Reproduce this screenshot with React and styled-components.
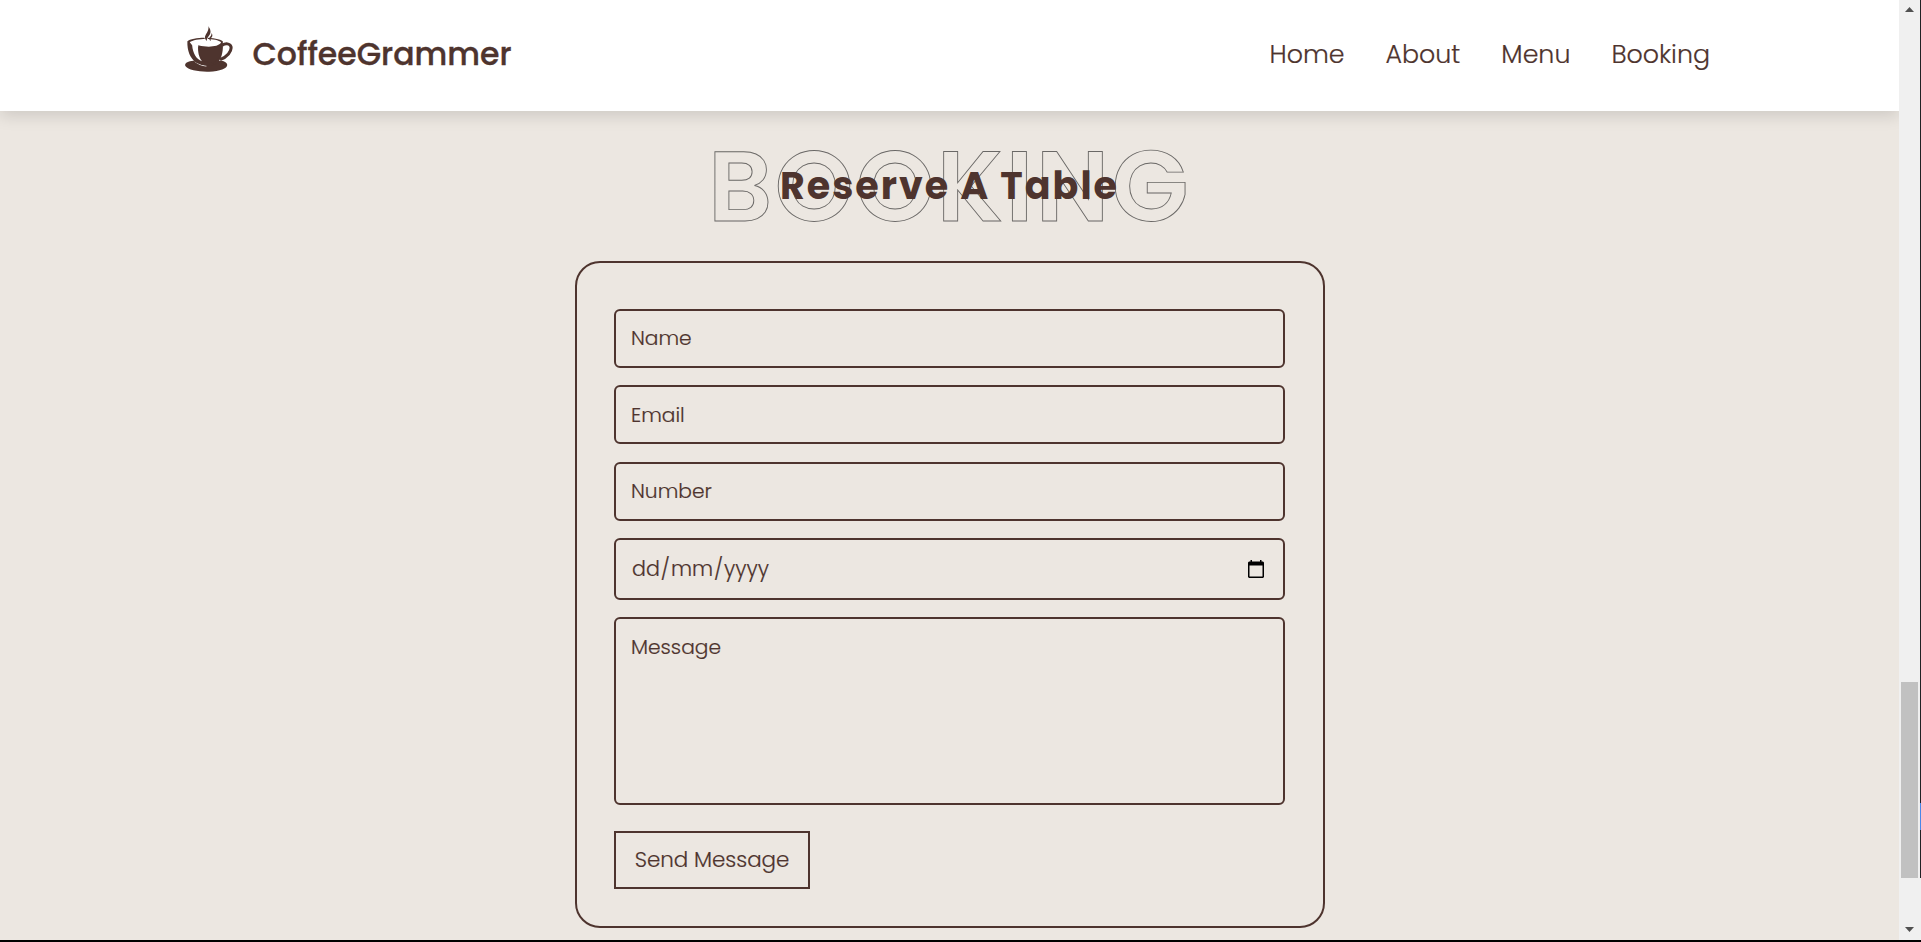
import React from 'react';
import styled, { createGlobalStyle } from 'styled-components';

const brown = '#4e342e';
const sand = '#ece7e1';

const Global = createGlobalStyle`
  *, *::before, *::after { box-sizing: border-box; }
  body {
    margin: 0;
    background: #000;
    color: ${brown};
    font-family: Poppins, Inter, 'Open Sans', sans-serif;
    overflow: hidden;
  }
`;

const Window = styled.div`
  display: flex;
  width: 1921px;
  height: 942px;
  padding-bottom: 2px;
  background: #000;
`;

const Page = styled.div`
  display: flex;
  flex-direction: column;
  width: 1899px;
  background: ${sand};
`;

const Header = styled.header`
  display: flex;
  flex: none;
  align-items: center;
  justify-content: space-between;
  height: 111px;
  padding: 0 189px 3px 185px;
  background: #fff;
  box-shadow: 0 5px 15px rgba(0, 0, 0, 0.13);
`;

const Brand = styled.a`
  display: flex;
  align-items: center;
  gap: 19.5px;
  > svg { margin-bottom: 11px; }
`;

const BrandName = styled.span`
  font-size: 31.5px;
  font-weight: 500;
  line-height: 40px;
  -webkit-text-stroke: 0.35px ${brown};
`;

const Nav = styled.nav`
  display: flex;
  gap: 41px;
`;

const NavLink = styled.a`
  font-size: 25.3px;
  font-weight: 300;
  line-height: 40px;
  white-space: nowrap;
  -webkit-text-stroke: 0.2px ${brown};
`;

const Heading = styled.div`
  display: grid;
  justify-items: center;
  align-items: center;
  height: 150px;
  > * { grid-area: 1 / 1; margin: 0; white-space: nowrap; }
`;

const Backdrop = styled.span`
  font-size: 100px;
  font-weight: 600;
  line-height: 150px;
  letter-spacing: 2.5px;
  color: transparent;
  -webkit-text-stroke: 0.9px #6a6866;
`;

const Title = styled.h2`
  font-size: 38px;
  font-weight: 700;
  line-height: 50px;
  letter-spacing: 2px;
`;

const Form = styled.form`
  display: flex;
  flex: none;
  flex-direction: column;
  align-items: flex-start;
  align-self: center;
  width: 750px;
  height: 667px;
  padding: 46px 37.5px 0;
  border: 2px solid ${brown};
  border-radius: 25px;
`;

const Field = styled.label`
  display: flex;
  align-items: ${(p) => (p.$top ? 'flex-start' : 'center')};
  width: 671px;
  height: ${(p) => p.$height}px;
  margin-bottom: ${(p) => p.$gap}px;
  padding: ${(p) => (p.$top ? '12px' : '0')} 19px 0 15px;
  border: 2px solid ${brown};
  border-radius: 6px;
`;

const Hint = styled.span`
  flex: 1;
  padding-bottom: ${(p) => p.$lift || 0}px;
  font-size: 20.2px;
  font-weight: 300;
  line-height: 32px;
  -webkit-text-stroke: 0.2px ${brown};
`;

const DateHint = styled(Hint)`
  font-size: 20.6px;
`;

const DatePart = styled.span`
  padding: 0 1px;
`;

const Send = styled.button`
  width: 196px;
  height: 58px;
  padding: 0 0 2px;
  border: 2px solid ${brown};
  background: transparent;
  color: ${brown};
  font: inherit;
  font-size: 21.4px;
  font-weight: 300;
  -webkit-text-stroke: 0.2px ${brown};
`;

const Scrollbar = styled.div`
  display: flex;
  flex-direction: column;
  align-items: center;
  width: 21px;
  padding-top: 7px;
  background: #f0f0f0;
  > svg { flex: none; }
`;

const Thumb = styled.div`
  width: 17px;
  height: 196px;
  margin: 670px 0 49px;
  background: #c1c1c1;
`;

const Edge = styled.div`
  width: 1px;
  background: linear-gradient(#202124 803px, #4a86e8 803px 830px, #202124 830px 878px, #f0f0f0 878px);
`;

const CupIcon = () => (
  <svg width="48" height="46" viewBox="15 18 141 138" preserveAspectRatio="none" fill={brown}>
    <path d="M40 122C22 123 13 130 16 138c8 12 40 18 70 17 32-1 54-11 53-21-1-7-7-10-17-12z" />
    <path d="M44 124q14 12 34 14" fill="none" stroke="#fff" strokeWidth="3" />
    <path d="M22 64c-1 28 8 52 26 64 12 6 20 9 36 9 14 0 20-3 28-11 12-12 16-36 14-62-14-14-90-15-104 0z" />
    <path d="M29 67c14-13 80-14 92 0-4 10-21 13-36 13-10 0-19-1-31-4-2 20 2 37 11 48C48 118 38 100 36 76z" fill="#fff" />
    <path d="M54 81c20 4 44 4 64-3v30l-20 22-28-6c-10-12-15-26-16-43z" />
    <path d="M124 76c10-7 23-6 26 4 3 14-12 31-32 39" fill="none" stroke={brown} strokeWidth="9" />
    <path d="M84 18c1 5 6 8 6 17 0 12-11 14-11 28-6-6-7-13-3-19 4-7 9-13 8-26z" stroke="#fff" strokeWidth="3" paintOrder="stroke" />
    <path d="M93 39c4 7 3 11-2 16-1 3-1 5 0 8-5-3-6-8-3-12 3-3 5-6 5-12z" />
  </svg>
);

const CalendarIcon = () => (
  <svg width="16" height="18" viewBox="0 0 16 18">
    <path fill="#000" fillRule="evenodd" d="M2.500 0h1.500v1.500h8V0h1.500v1.500h1.500L16 2.500v14.500L15 18H1L0 17V2.500L1 1.500h1.500zM1.500 5.600v10.900h13V5.600z" />
  </svg>
);

const Arrow = ({ down }) => (
  <svg width="9" height="5" viewBox="0 0 9 5" fill="#505050">
    <path d={down ? 'M0 0h9L4.500 5z' : 'M0 5h9L4.500 0z'} />
  </svg>
);

export default function App() {
  return (
    <Window>
      <Global />
      <Page>
        <Header>
          <Brand><CupIcon /><BrandName>CoffeeGrammer</BrandName></Brand>
          <Nav>
            <NavLink>Home</NavLink>
            <NavLink>About</NavLink>
            <NavLink>Menu</NavLink>
            <NavLink>Booking</NavLink>
          </Nav>
        </Header>
        <Heading>
          <Backdrop>BOOKING</Backdrop>
          <Title>Reserve A Table</Title>
        </Heading>
        <Form>
          <Field $height={59} $gap={17}><Hint $lift={2}>Name</Hint></Field>
          <Field $height={59} $gap={18}><Hint>Email</Hint></Field>
          <Field $height={59} $gap={17}><Hint $lift={2}>Number</Hint></Field>
          <Field $height={62} $gap={17}>
            <DateHint $lift={1}>
              <DatePart>dd</DatePart>/<DatePart>mm</DatePart>/<DatePart>yyyy</DatePart>
            </DateHint>
            <CalendarIcon />
          </Field>
          <Field $height={188} $gap={26} $top><Hint>Message</Hint></Field>
          <Send type="button">Send Message</Send>
        </Form>
      </Page>
      <Scrollbar>
        <Arrow />
        <Thumb />
        <Arrow down />
      </Scrollbar>
      <Edge />
    </Window>
  );
}
